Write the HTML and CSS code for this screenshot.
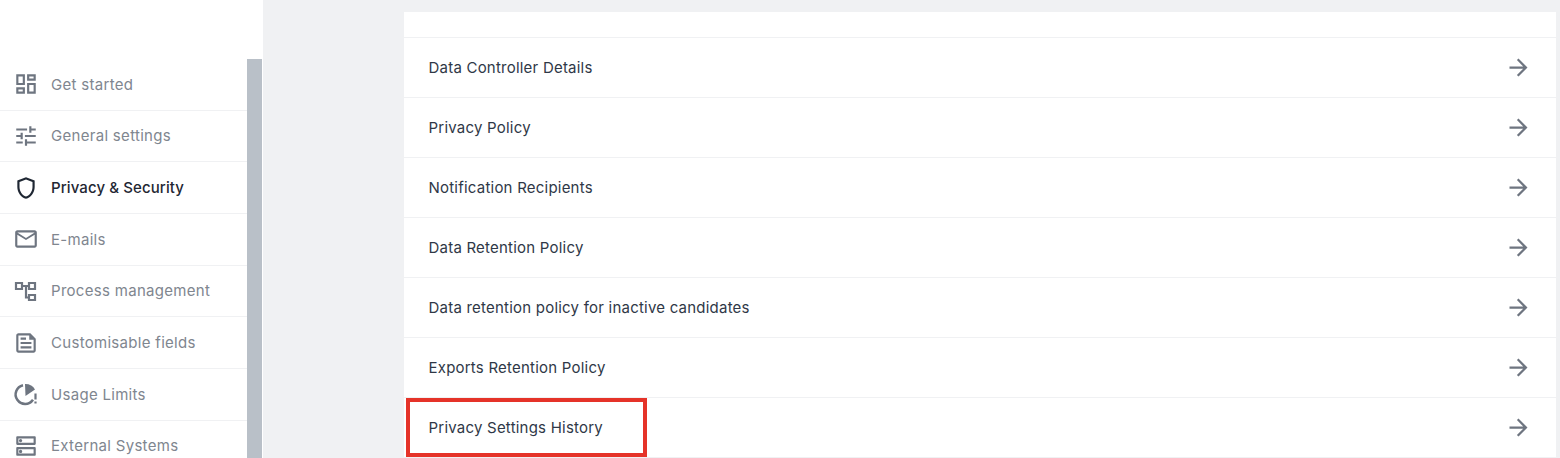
FILE: index.html
```html
<!DOCTYPE html>
<html lang="en">
<head>
<meta charset="utf-8">
<title>Privacy &amp; Security</title>
<link rel="stylesheet" href="styles.css">
</head>
<body>
<div class="page">
  <aside class="sidebar">
    <div class="side-top"></div>
    <div class="side-body">
      <nav class="menu">
        <a class="item"><svg class="ico" viewBox="0 0 24 24"><path d="M19 5v2h-4V5h4M9 5v6H5V5h4m10 8v6h-4v-6h4M9 17v2H5v-2h4M21 3h-8v6h8V3zM11 3H3v10h8V3zm10 8h-8v10h8V11zm-10 4H3v6h8v-6z"/></svg><span>Get started</span></a>
        <a class="item"><svg class="ico" viewBox="0 0 24 24"><path d="M3 17v2h6v-2H3zM3 5v2h10V5H3zm10 16v-2h8v-2h-8v-2h-2v6h2zM7 9v2H3v2h4v2h2V9H7zm14 4v-2H11v2h10zm-6-4h2V7h4V5h-4V3h-2v6z"/></svg><span>General settings</span></a>
        <a class="item active"><svg class="ico" viewBox="0 0 24 24"><path d="M12 2 4 5v6.090c0 5.050 3.410 9.760 8 10.910 4.590-1.150 8-5.860 8-10.910V5l-8-3zm6 9.090c0 4-2.550 7.700-6 8.830-3.450-1.130-6-4.820-6-8.830v-4.700l6-2.250 6 2.250v4.700z"/></svg><span>Privacy &amp; Security</span></a>
        <a class="item"><svg class="ico" viewBox="0 0 24 24"><path d="M20 4H4c-1.100 0-1.990.9-1.990 2L2 18c0 1.100.9 2 2 2h16c1.100 0 2-.9 2-2V6c0-1.100-.9-2-2-2zm0 14H4V8l8 5 8-5v10zm-8-7L4 6h16l-8 5z"/></svg><span>E-mails</span></a>
        <a class="item"><svg class="ico" viewBox="0 0 26 26"><path class="line" d="M3 5h6v6H3zM16 5h6v6h-6zM16 17h6v5h-6zM9 8h7M13 8v11.500h3"/></svg><span>Process management</span></a>
        <a class="item"><svg class="ico" viewBox="0 0 24 24"><path d="M16 3H5C3.900 3 3 3.900 3 5v14c0 1.100.9 2 2 2h14c1.100 0 2-.9 2-2V8L16 3zM19 19H5V5h10v4h4V19zM7 17h10v-2H7V17zM12 7H7v2h5V7zM7 13h10v-2H7V13z"/></svg><span>Customisable fields</span></a>
        <a class="item"><svg class="ico" viewBox="0 0 26 26"><path class="line thick" d="M10 4.200A9.500 9.500 0 1 0 20 18.800"/><path d="M12 3a11 11 0 0 1 10 5.500L12.500 15z"/><path class="line" d="M22.500 12.500v6M22.500 20.500v2"/></svg><span>Usage Limits</span></a>
        <a class="item"><svg class="ico" viewBox="0 0 24 24"><path d="M19 15v4H5v-4h14m1-2H4c-.55 0-1 .45-1 1v6c0 .55.45 1 1 1h16c.55 0 1-.45 1-1v-6c0-.55-.45-1-1-1zM7 18.500c-.82 0-1.500-.67-1.500-1.500s.68-1.500 1.500-1.500 1.500.67 1.500 1.500-.67 1.500-1.500 1.500zM19 5v4H5V5h14m1-2H4c-.55 0-1 .45-1 1v6c0 .55.45 1 1 1h16c.55 0 1-.45 1-1V4c0-.55-.45-1-1-1zM7 8.500c-.82 0-1.500-.67-1.500-1.500S6.180 5.500 7 5.500s1.500.68 1.500 1.500S7.830 8.500 7 8.500z"/></svg><span>External Systems</span></a>
      </nav>
      <div class="thumb"></div>
    </div>
  </aside>
  <main class="content">
    <section class="card">
      <div class="head"></div>
      <a class="row"><span>Data Controller Details</span><svg class="arrow" viewBox="0 0 24 24"><path d="M12 4l-1.410 1.410L16.170 11H4v2h12.170l-5.580 5.590L12 20l8-8z"/></svg></a>
      <a class="row"><span>Privacy Policy</span><svg class="arrow" viewBox="0 0 24 24"><path d="M12 4l-1.410 1.410L16.170 11H4v2h12.170l-5.580 5.590L12 20l8-8z"/></svg></a>
      <a class="row"><span>Notification Recipients</span><svg class="arrow" viewBox="0 0 24 24"><path d="M12 4l-1.410 1.410L16.170 11H4v2h12.170l-5.580 5.590L12 20l8-8z"/></svg></a>
      <a class="row"><span>Data Retention Policy</span><svg class="arrow" viewBox="0 0 24 24"><path d="M12 4l-1.410 1.410L16.170 11H4v2h12.170l-5.580 5.590L12 20l8-8z"/></svg></a>
      <a class="row"><span>Data retention policy for inactive candidates</span><svg class="arrow" viewBox="0 0 24 24"><path d="M12 4l-1.410 1.410L16.170 11H4v2h12.170l-5.580 5.590L12 20l8-8z"/></svg></a>
      <a class="row"><span>Exports Retention Policy</span><svg class="arrow" viewBox="0 0 24 24"><path d="M12 4l-1.410 1.410L16.170 11H4v2h12.170l-5.580 5.590L12 20l8-8z"/></svg></a>
      <a class="row"><span>Privacy Settings History</span><svg class="arrow" viewBox="0 0 24 24"><path d="M12 4l-1.410 1.410L16.170 11H4v2h12.170l-5.580 5.590L12 20l8-8z"/></svg><i class="mark"></i></a>
    </section>
  </main>
</div>
</body>
</html>
```
FILE: styles.css
```css
* { box-sizing: border-box; }
html, body { margin: 0; height: 100%; overflow: hidden; }
body { background: #f0f1f3; font-family: "Inter", "Liberation Sans", sans-serif; font-size: 15px; }
.page { display: flex; height: 458px; overflow: hidden; }
.sidebar { width: 263px; flex: none; background: #fff; display: flex; flex-direction: column; }
.side-top { height: 59px; flex: none; }
.side-body { display: flex; flex: 1; min-height: 0; }
.menu { flex: 1; min-width: 0; }
.thumb { width: 15px; margin-right: 1px; background: #b9c0c8; flex: none; }
.item { display: flex; align-items: center; gap: 12px; height: 51.66px; padding-left: 13px; border-bottom: 1px solid #f0f1f3; color: #80868f; font-size: 15px; letter-spacing: 0.3px; white-space: nowrap; }
.item.active { color: #1f2733; font-weight: 500; letter-spacing: 0.1px; }
.ico { width: 26px; height: 26px; flex: none; fill: #6e7580; }
.ico .line { fill: none; stroke: #6e7580; stroke-width: 2.2; }
.ico .thick { stroke-width: 2.5; }
.active .ico { fill: #1f2733; }
.content { flex: 1; min-width: 0; padding: 12px 4px 0 141px; }
.card { background: #fff; }
.head { height: 26px; border-bottom: 1px solid #f0f1f3; }
.row { position: relative; display: flex; align-items: center; justify-content: space-between; height: 60px; padding: 0 24.5px 0 24.5px; border-bottom: 1px solid #f0f1f3; color: #2f3847; font-size: 15px; letter-spacing: 0.22px; }
.arrow { width: 27px; height: 27px; flex: none; fill: #6e7580; }
.mark { position: absolute; left: 2px; top: 0; width: 241px; height: 59px; border: 4px solid #e53329; }
```
